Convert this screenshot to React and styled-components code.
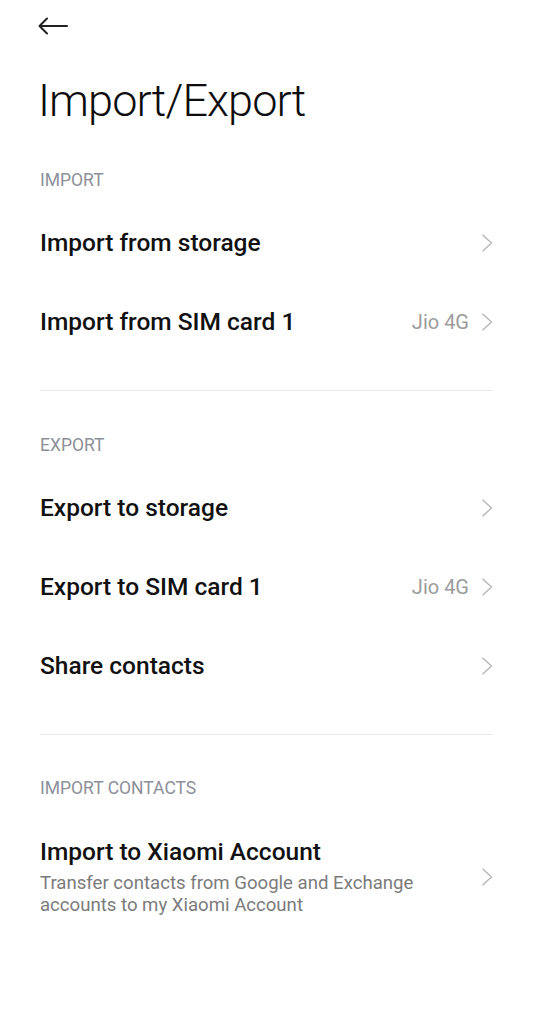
import React from "react";
import styled, { createGlobalStyle } from "styled-components";

const Global = createGlobalStyle`
  html, body { margin: 0; padding: 0; background: #fff; }
  body { font-family: Roboto, "Noto Sans", Arial, sans-serif; -webkit-font-smoothing: antialiased; }
`;

const Page = styled.div`
  width: 533px;
  min-height: 1024px;
  background: #ffffff;
  padding: 0 40px;
  box-sizing: border-box;
`;

const TopBar = styled.div`
  height: 52px;
  display: flex;
  align-items: center;
`;

const BackButton = styled.button`
  border: 0;
  background: none;
  padding: 0;
  margin-left: -3px;
  display: flex;
  align-items: center;
  cursor: pointer;
`;

const Title = styled.h1`
  margin: 21px 0 0 -2px;
  font-size: 45px;
  line-height: 56px;
  font-weight: 300;
  color: #0d0d0d;
  letter-spacing: -0.9px;
`;

const Section = styled.section`
  margin-top: ${(p) => p.$top}px;
`;

const SectionHeader = styled.div`
  font-size: 17.5px;
  line-height: 20px;
  color: #8d9099;
  margin-bottom: 13px;
`;

const Row = styled.div`
  display: flex;
  align-items: center;
  min-height: 79px;
  gap: 12px;
  padding: ${(p) => (p.$tall ? "26px 0 22px" : "0")};
  box-sizing: border-box;
`;

const RowText = styled.div`
  flex: 1;
  display: flex;
  flex-direction: column;
`;

const RowTitle = styled.div`
  font-size: 24.5px;
  line-height: 30px;
  font-weight: 500;
  color: #111;
`;

const RowSub = styled.div`
  font-size: 18.6px;
  line-height: 21.5px;
  color: #7b7b7b;
  margin-top: 6px;
  max-width: 400px;
`;

const Value = styled.span`
  font-size: 20px;
  color: #9c9c9c;
`;

const Divider = styled.div`
  height: 1px;
  background: #e8e8e8;
  margin-top: 29px;
`;

const Chevron = () => (
  <svg width="12" height="18" viewBox="0 0 12 18" style={{ flexShrink: 0 }}>
    <polyline points="1.5,0.8 10.5,9 1.5,17.2" fill="none" stroke="#b4b4b4" strokeWidth="1.3" strokeLinejoin="miter" />
  </svg>
);

const Item = ({ title, value }) => (
  <Row>
    <RowText>
      <RowTitle>{title}</RowTitle>
    </RowText>
    {value && <Value>{value}</Value>}
    <Chevron />
  </Row>
);

export default function App() {
  return (
    <>
      <Global />
      <Page>
        <TopBar>
          <BackButton aria-label="Back">
            <svg width="32" height="20" viewBox="0 0 32 20">
              <path d="M30 10H2.5M10 2.5L2.5 10L10 17.5" fill="none" stroke="#222" strokeWidth="2" strokeLinecap="round" strokeLinejoin="round" />
            </svg>
          </BackButton>
        </TopBar>
        <Title>Import/Export</Title>

        <Section $top={41}>
          <SectionHeader>IMPORT</SectionHeader>
          <Item title="Import from storage" />
          <Item title="Import from SIM card 1" value="Jio 4G" />
        </Section>
        <Divider />

        <Section $top={44}>
          <SectionHeader>EXPORT</SectionHeader>
          <Item title="Export to storage" />
          <Item title="Export to SIM card 1" value="Jio 4G" />
          <Item title="Share contacts" />
        </Section>
        <Divider />

        <Section $top={43}>
          <SectionHeader>IMPORT CONTACTS</SectionHeader>
          <Row $tall>
            <RowText>
              <RowTitle>Import to Xiaomi Account</RowTitle>
              <RowSub>Transfer contacts from Google and Exchange accounts to my Xiaomi Account</RowSub>
            </RowText>
            <Chevron />
          </Row>
        </Section>
      </Page>
    </>
  );
}
